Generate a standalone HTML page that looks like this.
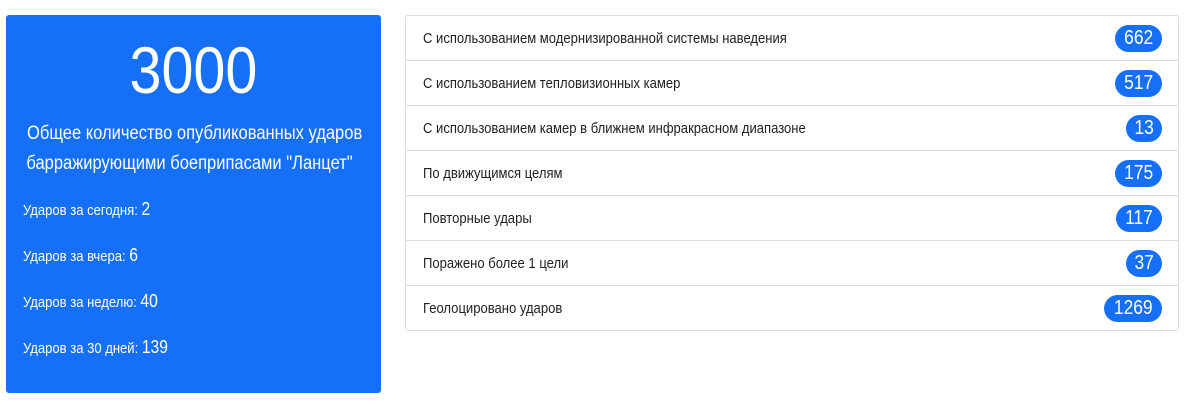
<!DOCTYPE html>
<html><head><meta charset="utf-8"><style>
body{margin:0;width:1190px;height:405px;background:#fff;font-family:"Liberation Sans",sans-serif;position:relative;overflow:hidden}
.c{display:inline-block;transform:scaleX(0.87);transform-origin:left center;white-space:nowrap}
.cc{display:inline-block;transform:scaleX(0.87);transform-origin:center center;white-space:nowrap}
.card{position:absolute;left:6px;top:15px;width:375px;height:378px;background:#1570f7;border-radius:3px;color:#fff}
.big{position:absolute;top:19px;width:100%;text-align:center;font-size:66px;line-height:72px}
.title{position:absolute;top:104px;left:-4px;width:100%;text-align:center;font-size:19px;line-height:30px}
.s{position:absolute;left:17px;font-size:15px}
.s b{font-weight:normal;font-size:18px}
.list{position:absolute;left:405px;top:15px;width:772px;border:1px solid #dcdcdc;border-radius:3px}
.row{height:44px;border-top:1px solid #dcdcdc;position:relative;font-size:15px;color:#222}
.row:first-child{border-top:none}
.row>span{position:absolute;left:17px;top:14px}
.bd{position:absolute;right:16px;top:9px;height:27px;line-height:27px;padding:0 7px;background:#1570f7;color:#fff;border-radius:14px;font-size:20px}
</style></head><body>
<div class="card">
<div class="big"><span class="cc">3000</span></div>
<div class="title"><span class="cc">Общее количество опубликованных ударов</span><br><span class="cc">барражирующими боеприпасами "Ланцет"</span></div>
<div class="s" style="top:184px"><span class="c">Ударов за сегодня: <b>2</b></span></div>
<div class="s" style="top:230px"><span class="c">Ударов за вчера: <b>6</b></span></div>
<div class="s" style="top:276px"><span class="c">Ударов за неделю: <b>40</b></span></div>
<div class="s" style="top:322px"><span class="c">Ударов за 30 дней: <b>139</b></span></div>
</div>
<div class="list">
<div class="row"><span class="c">С использованием модернизированной системы наведения</span><div class="bd"><span class="cc">662</span></div></div>
<div class="row"><span class="c">С использованием тепловизионных камер</span><div class="bd"><span class="cc">517</span></div></div>
<div class="row"><span class="c">С использованием камер в ближнем инфракрасном диапазоне</span><div class="bd"><span class="cc">13</span></div></div>
<div class="row"><span class="c">По движущимся целям</span><div class="bd"><span class="cc">175</span></div></div>
<div class="row"><span class="c">Повторные удары</span><div class="bd"><span class="cc">117</span></div></div>
<div class="row"><span class="c">Поражено более 1 цели</span><div class="bd"><span class="cc">37</span></div></div>
<div class="row"><span class="c">Геолоцировано ударов</span><div class="bd"><span class="cc">1269</span></div></div>
</div>
</body></html>
